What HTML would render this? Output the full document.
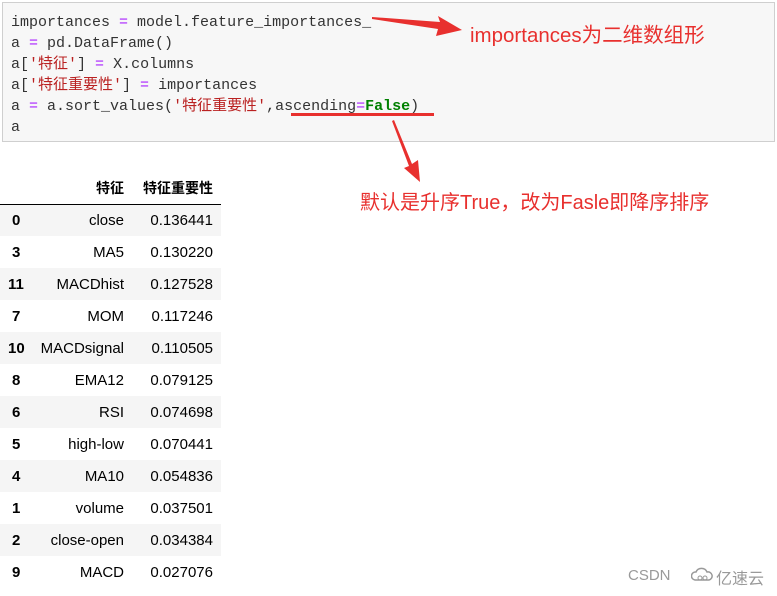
<html><head><style>
body{margin:0;width:777px;height:596px;background:#fff;position:relative;overflow:hidden;font-family:"Liberation Sans","Noto Sans CJK SC",sans-serif}
.code{position:absolute;left:2px;top:2px;width:773px;height:140px;background:#f7f7f7;border:1px solid #cfcfcf;box-sizing:border-box}
.code pre{margin:0;position:absolute;left:8px;top:9px;font:15px/21px "Liberation Mono","Noto Sans CJK SC",monospace;color:#333}
.o{color:#aa22ff}.s{color:#ba2121}.k{color:#008000;font-weight:bold}
.t{position:absolute;left:0;top:173px;border-collapse:collapse;font-size:15px;color:#000}
.t td,.t th{height:32px;padding:0;text-align:right}
.t th{height:31px;border-bottom:1px solid #000;font-size:14px}
.t tr:nth-child(even) td{background:#f5f5f5}
.a{position:absolute;color:#e8302e;font-size:20.5px}
</style></head><body>
<div class="code"><pre>importances <span class="o">=</span> model.feature_importances_
a <span class="o">=</span> pd.DataFrame()
a[<span class="s">'特征'</span>] <span class="o">=</span> X.columns
a[<span class="s">'特征重要性'</span>] <span class="o">=</span> importances
a <span class="o">=</span> a.sort_values(<span class="s">'特征重要性'</span>,ascending<span class="o">=</span><span class="k">False</span>)
a</pre></div>
<svg style="position:absolute;left:0;top:0" width="777" height="200">
<polygon points="372,17 440,22 438,16 462,30 436,36 438,29 372,19" fill="#e8302e"/>
<rect x="291" y="113" width="143" height="3" fill="#e8302e"/>
<polygon points="394,120 412,164 418,160 420,182 404,168 409,166 392,121" fill="#e8302e"/>
</svg>
<div class="a" style="left:470px;top:18px">importances为二维数组形</div>
<div class="a" style="left:360px;top:186px;font-size:20px">默认是升序True，改为Fasle即降序排序</div>
<table class="t">
<tr><th style="width:30px"></th><th style="width:94px;font-weight:bold">特征</th><th style="width:89px;padding-right:8px">特征重要性</th></tr>
<tr><td style="text-align:left;padding-left:12px"><b>0</b></td><td>close</td><td style="padding-right:8px">0.136441</td></tr>
<tr><td style="text-align:left;padding-left:12px"><b>3</b></td><td>MA5</td><td style="padding-right:8px">0.130220</td></tr>
<tr><td style="text-align:left;padding-left:8px"><b>11</b></td><td>MACDhist</td><td style="padding-right:8px">0.127528</td></tr>
<tr><td style="text-align:left;padding-left:12px"><b>7</b></td><td>MOM</td><td style="padding-right:8px">0.117246</td></tr>
<tr><td style="text-align:left;padding-left:8px"><b>10</b></td><td>MACDsignal</td><td style="padding-right:8px">0.110505</td></tr>
<tr><td style="text-align:left;padding-left:12px"><b>8</b></td><td>EMA12</td><td style="padding-right:8px">0.079125</td></tr>
<tr><td style="text-align:left;padding-left:12px"><b>6</b></td><td>RSI</td><td style="padding-right:8px">0.074698</td></tr>
<tr><td style="text-align:left;padding-left:12px"><b>5</b></td><td>high-low</td><td style="padding-right:8px">0.070441</td></tr>
<tr><td style="text-align:left;padding-left:12px"><b>4</b></td><td>MA10</td><td style="padding-right:8px">0.054836</td></tr>
<tr><td style="text-align:left;padding-left:12px"><b>1</b></td><td>volume</td><td style="padding-right:8px">0.037501</td></tr>
<tr><td style="text-align:left;padding-left:12px"><b>2</b></td><td>close-open</td><td style="padding-right:8px">0.034384</td></tr>
<tr><td style="text-align:left;padding-left:12px"><b>9</b></td><td>MACD</td><td style="padding-right:8px">0.027076</td></tr>
</table>
<div style="position:absolute;left:628px;top:567px;color:#999;font-size:15px">CSDN</div>
<svg style="position:absolute;left:691px;top:566px" width="24" height="18"><path d="M4 14a4 4 0 0 1 1-8a6 6 0 0 1 11 0a4 4 0 0 1 2 8z" fill="none" stroke="#999" stroke-width="1.5"/><circle cx="9" cy="12" r="2" fill="none" stroke="#999"/><circle cx="14" cy="12" r="2" fill="none" stroke="#999"/></svg>
<div style="position:absolute;left:716px;top:565px;color:#999;font-size:16px">亿速云</div>
</body></html>
